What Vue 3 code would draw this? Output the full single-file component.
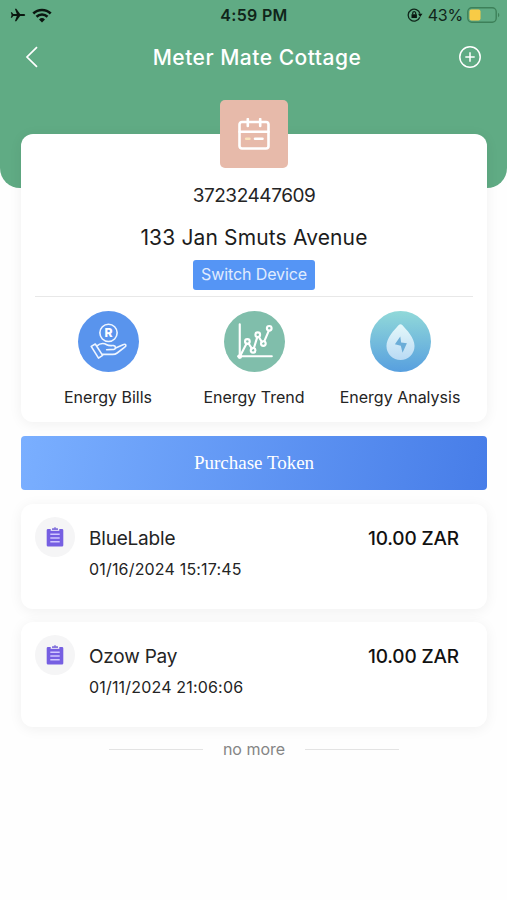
<template>
  <div class="page">
    <header class="hero">
      <div class="status-bar">
        <div class="status-left">
          <svg class="plane" viewBox="0 0 16 14">
            <path d="M15.2 7c0-.7-.8-1.1-1.700-1.100h-3.400L6.300.7H4.900l1.900 5.200H3.300L1.900 4.200H.8L1.600 7 .8 9.800h1.100l1.400-1.700h3.500l-1.900 5.200h1.400l3.800-5.200h3.400c.9 0 1.700-.4 1.700-1.100z" />
          </svg>
          <svg class="wifi" viewBox="0 0 20 15">
            <path d="M1.300 5.500a12.400 12.400 0 0 1 17.400 0M4.500 8.700a7.900 7.900 0 0 1 11 0" />
            <path class="solid" d="M10 14.500l-3-3.100a4.300 4.300 0 0 1 6 0z" />
          </svg>
        </div>
        <span class="clock">4:59 PM</span>
        <div class="status-right">
          <svg class="rotation" viewBox="0 0 16 14">
            <path d="M12.800 9.300A6 6 0 1 1 13 5.600" />
            <path class="solid" d="M11 5.800h4.500L13.200 9zM4.500 6.300h5.400V10H4.500z" />
            <path d="M5.700 6.500V5.200a1.500 1.500 0 0 1 3 0v1.300" />
          </svg>
          <span class="percent">43%</span>
          <svg class="battery" viewBox="0 0 33 16">
            <rect class="outline" x=".8" y=".8" width="28.400" height="14.400" rx="4" />
            <rect class="level" x="2.500" y="2.600" width="11" height="10.800" rx="2" />
            <path class="cap" d="M31 5.800c1.800.7 1.800 3.700 0 4.400z" />
          </svg>
        </div>
      </div>
      <nav class="nav-bar">
        <svg class="back" viewBox="0 0 14 22">
          <path d="M12 1.200L2 11l10 9.800" />
        </svg>
        <h1>Meter Mate Cottage</h1>
        <svg class="add" viewBox="0 0 24 24">
          <circle cx="12" cy="12" r="10.200" />
          <path d="M12 7.300v9.400M7.300 12h9.400" />
        </svg>
      </nav>
    </header>

    <main class="content">
      <section class="device-card">
        <div class="device-badge">
          <svg viewBox="0 0 32 32">
            <rect x="1.500" y="4" width="29" height="26.500" rx="2.500" />
            <path d="M1.500 13.800h29M9.800 1v7M22.200 1v7M17 20.800h7.500" />
            <path class="dash" d="M8.200 20.800h3.200" />
          </svg>
        </div>
        <div class="meter-no">37232447609</div>
        <div class="address">133 Jan Smuts Avenue</div>
        <button class="switch-btn">Switch Device</button>

        <div class="shortcuts">
          <div class="shortcut">
            <svg class="round-icon" viewBox="0 0 60 60">
              <circle cx="30" cy="30" r="30" fill="#5994ed" />
              <g class="bills">
                <circle cx="30" cy="21.500" r="8.500" />
                <path d="M13 34.800l4-2.300 7.200 11.200-4 2.600zM18.300 34.500c3-2.500 6.800-3.300 10-1.300 2 1.200 4.200.7 6.700.8 2.300.1 2.500 3.500.3 3.700l-7.100.4M36.500 36.600l7.800-3.500c2.800-1.200 3.800 1 1.700 2.500l-7.500 5.700c-1.300 1-2.700 1.400-4.300 1.400h-10" />
              </g>
              <text x="30" y="25.700" class="rand">R</text>
            </svg>
            <span>Energy Bills</span>
          </div>
          <div class="shortcut">
            <svg class="round-icon" viewBox="0 0 60 60">
              <circle cx="30" cy="30" r="30" fill="#80beab" />
              <g class="trend">
                <path d="M15.500 13v32M14 44.500h33" />
                <path d="M16 44l6.200-12M24.200 32l3.300 5M29.500 36.200l3.200-10.500M34.300 25.500l3 5M39.700 29.700L44 19.500" />
                <circle cx="23" cy="30" r="2.300" />
                <circle cx="28.600" cy="38.700" r="2.300" />
                <circle cx="33.200" cy="23.300" r="2.300" />
                <circle cx="38.700" cy="32" r="2.300" />
                <circle cx="44.500" cy="17" r="2.300" />
              </g>
              <circle cx="15.500" cy="44.800" r="2.300" fill="#fff" />
            </svg>
            <span>Energy Trend</span>
          </div>
          <div class="shortcut">
            <svg class="round-icon" viewBox="0 0 60 60">
              <defs>
                <linearGradient id="water" x1="0" y1="0" x2="0" y2="1">
                  <stop offset="0" stop-color="#91d9d9" />
                  <stop offset="1" stop-color="#579fdf" />
                </linearGradient>
                <linearGradient id="drop" x1="0" y1="0" x2="0" y2="1">
                  <stop offset="0" stop-color="#e5f8fa" />
                  <stop offset="1" stop-color="#b9daf4" />
                </linearGradient>
              </defs>
              <circle cx="30" cy="30" r="30" fill="url(#water)" />
              <path fill="url(#drop)" d="M28.300 13.700c1-1 2.400-1 3.400 0C36 18.300 43.800 26.500 43.800 34.500a13.800 13.800 0 0 1-27.600 0c0-8 7.800-16.200 12.100-20.800z" />
              <path fill="#6badd8" d="M29.800 25.200l-5.300 7.600 5.800 1.500 1.700 6.800 4.300-9.300-5.700-.8z" />
            </svg>
            <span>Energy Analysis</span>
          </div>
        </div>
      </section>

      <button class="purchase-btn">Purchase Token</button>

      <article v-for="item in records" :key="item.time" class="record">
        <div class="record-icon">
          <svg viewBox="0 0 18 20">
            <path fill="#765fe2" d="M2 2h14a1.300 1.300 0 0 1 1.300 1.300v14.900a1.300 1.300 0 0 1-1.300 1.300H2a1.300 1.300 0 0 1-1.300-1.300V3.300A1.300 1.300 0 0 1 2 2z" />
            <path fill="#f5f4f8" d="M4.700 1.500h8.600v2.300H4.700z" />
            <path fill="#8777dc" d="M6 1.200h1.600a1.500 1.500 0 0 1 2.800 0H12v1.900H6z" />
            <path class="lines" d="M4.300 7.200h9.400M4.300 11h9.400M4.300 14.800h9.400" />
          </svg>
        </div>
        <div class="record-info">
          <div class="record-name">{{ item.name }}</div>
          <div class="record-time">{{ item.time }}</div>
        </div>
        <div class="record-amount">{{ item.amount }}</div>
      </article>

      <div class="list-end"><span>no more</span></div>
    </main>
  </div>
</template>

<script setup>
const records = [
  { name: 'BlueLable', time: '01/16/2024 15:17:45', amount: '10.00 ZAR' },
  { name: 'Ozow Pay', time: '01/11/2024 21:06:06', amount: '10.00 ZAR' }
];
</script>

<style>
body {
  background: #fefefe;
}
</style>

<style scoped>
.page {
  min-height: 900px;
  font-family: Inter, "Liberation Sans", sans-serif;
  color: #242424;
  overflow: hidden;
}

.page svg {
  display: block;
  flex: none;
}

.hero {
  height: 188px;
  background: #60ab84;
  border-radius: 0 0 20px 20px;
}

.status-bar {
  display: grid;
  grid-template-columns: 1fr auto 1fr;
  align-items: center;
  height: 30px;
  padding: 0 7px 0 10px;
  color: #10251a;
}

.status-left,
.status-right {
  display: flex;
  align-items: center;
}

.status-left {
  gap: 6px;
}

.status-right {
  justify-content: flex-end;
}

.plane {
  width: 16px;
  height: 14px;
  fill: #0b1710;
}

.wifi {
  width: 20px;
  height: 15px;
  fill: none;
  stroke: #0b1710;
  stroke-width: 2.6;
}

.solid {
  fill: #0b1710;
  stroke: none;
}

.clock {
  margin-right: 2px;
  font-size: 16px;
  font-weight: 600;
  letter-spacing: 0.3px;
}

.rotation {
  width: 16px;
  height: 14px;
  margin-right: 5px;
  fill: none;
  stroke: #10251a;
  stroke-width: 1.3;
}

.percent {
  font-size: 16px;
  letter-spacing: -0.2px;
  margin-right: 4px;
}

.battery {
  width: 33px;
  height: 16px;
}

.outline {
  fill: none;
  stroke: #3d8059;
  stroke-width: 1.4;
}

.level {
  fill: #f8cb46;
}

.cap {
  fill: #3d8059;
}

.nav-bar {
  display: flex;
  align-items: center;
  justify-content: space-between;
  height: 54px;
  padding: 0 25px;
}

.back {
  width: 14px;
  height: 22px;
  fill: none;
  stroke: #fff;
  stroke-width: 1.7;
}

.nav-bar h1 {
  margin: 1px 0 0 17px;
  font-size: 21px;
  font-weight: 500;
  letter-spacing: 0.5px;
  color: #fff;
}

.add {
  width: 24px;
  height: 24px;
  fill: none;
  stroke: #fff;
  stroke-width: 1.5;
}

.content {
  margin-top: -54px;
  padding: 0 20px 0 21px;
}

.device-card {
  display: flex;
  flex-direction: column;
  align-items: center;
  box-sizing: border-box;
  height: 288px;
  padding: 0 14px;
  background: #fff;
  border-radius: 12px;
  box-shadow: 0 2px 14px rgba(0, 0, 0, 0.06);
}

.device-badge {
  display: flex;
  align-items: center;
  justify-content: center;
  width: 68px;
  height: 68px;
  margin-top: -34px;
  background: #e7baaa;
  border-radius: 5px;
}

.device-badge svg {
  width: 32px;
  height: 32px;
  fill: none;
  stroke: #fff;
  stroke-width: 2.6;
  stroke-linecap: round;
}

.device-badge .dash {
  stroke: #fae4bd;
}

.meter-no {
  margin-top: 16px;
  font-size: 19px;
  line-height: 24px;
  letter-spacing: -0.45px;
}

.address {
  margin-top: 16px;
  font-size: 21px;
  line-height: 28px;
  letter-spacing: 0.15px;
  color: #1c1c1c;
}

.switch-btn {
  width: 122px;
  height: 30px;
  margin-top: 8px;
  padding: 0 0 2px;
  border: 0;
  border-radius: 3px;
  background: #5595f5;
  color: #e0ecfe;
  font-family: inherit;
  font-size: 16px;
  letter-spacing: -0.1px;
  white-space: nowrap;
}

.shortcuts {
  display: grid;
  grid-template-columns: repeat(3, 1fr);
  width: 100%;
  margin-top: 6px;
  padding-top: 14px;
  border-top: 1px solid #e8e8e8;
}

.shortcut {
  display: flex;
  flex-direction: column;
  align-items: center;
  font-size: 16px;
  line-height: 22px;
  white-space: nowrap;
}

.round-icon {
  width: 61px;
  height: 61px;
  margin-bottom: 14px;
}

.bills,
.trend {
  fill: none;
  stroke: #eef5ff;
  stroke-width: 1.6;
  stroke-linejoin: round;
  stroke-linecap: round;
}

.trend {
  stroke: #fff;
  stroke-width: 2.1;
}

.rand {
  font-size: 12px;
  font-weight: 800;
  text-anchor: middle;
  fill: #fff;
}

.purchase-btn {
  display: block;
  width: 100%;
  height: 54px;
  margin-top: 14px;
  padding: 0;
  border: 0;
  border-radius: 4px;
  background: linear-gradient(100deg, #7aafff, #477de8);
  color: #fff;
  font-family: "Liberation Serif", serif;
  font-size: 19px;
}

.record {
  display: flex;
  align-items: flex-start;
  box-sizing: border-box;
  height: 105px;
  margin-top: 14px;
  padding: 13px 28px 0 14px;
  background: #fff;
  border-radius: 12px;
  box-shadow: 0 2px 14px rgba(0, 0, 0, 0.06);
}

.record + .record {
  margin-top: 13px;
}

.record-icon {
  display: flex;
  align-items: center;
  justify-content: center;
  width: 40px;
  height: 40px;
  border-radius: 50%;
  background: #f5f5f6;
}

.record-icon svg {
  width: 18px;
  height: 20px;
}

.lines {
  fill: none;
  stroke: #d1c8ff;
  stroke-width: 1.4;
}

.record-info {
  flex: 1;
  margin-left: 14px;
}

.record-name {
  margin-top: 10px;
  font-size: 19px;
  line-height: 24px;
  letter-spacing: -0.2px;
}

.record-time {
  margin-top: 7px;
  font-size: 16px;
  line-height: 22px;
  letter-spacing: 0.18px;
}

.record-amount {
  margin-top: 10px;
  font-size: 19px;
  font-weight: 500;
  line-height: 24px;
  letter-spacing: -0.15px;
  color: #111;
}

.list-end {
  display: flex;
  align-items: center;
  justify-content: center;
  gap: 20px;
  margin-top: 10px;
  font-size: 16px;
  line-height: 24px;
  color: #858585;
}

.list-end::before,
.list-end::after {
  content: '';
  width: 94px;
  height: 1px;
  background: #e3e3e3;
}
</style>
